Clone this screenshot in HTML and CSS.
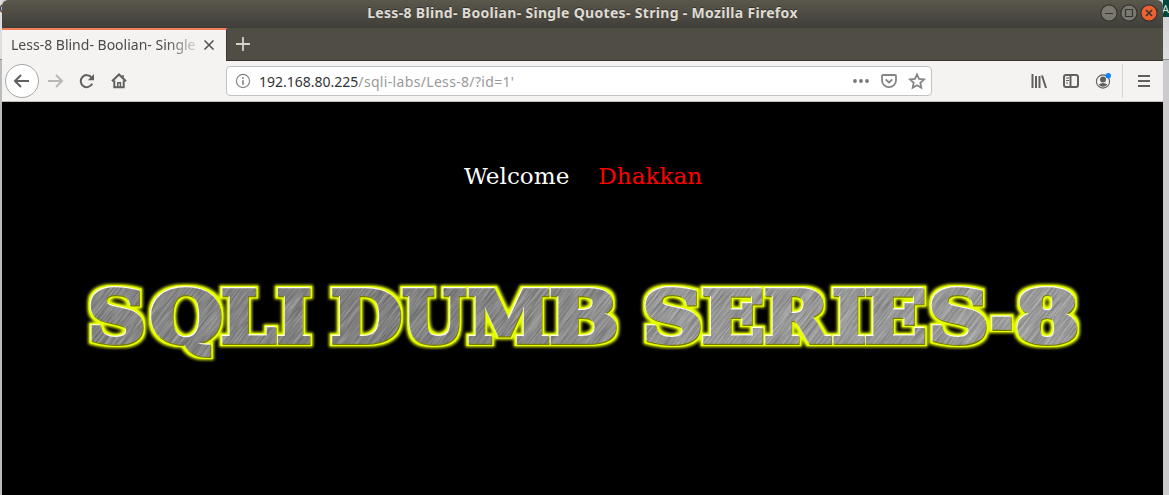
FILE: index.html
```html
<!DOCTYPE html>
<html lang="en">
<head>
<meta charset="utf-8">
<title>Less-8 Blind- Boolian- Single Quotes- String</title>
<link rel="stylesheet" href="styles.css">
</head>
<body>
<div class="desktop">
  <div class="behind-left"><span>C</span></div>
  <div class="window">
    <header class="titlebar">
      <h1 class="window-title">Less-8 Blind- Boolian- Single Quotes- String - Mozilla Firefox</h1>
      <div class="controls">
        <svg class="control" viewBox="0 0 18 18"><circle cx="9" cy="9" r="8.1"/><path d="M5 9.5h8"/></svg>
        <svg class="control" viewBox="0 0 18 18"><circle cx="9" cy="9" r="8.1"/><path d="M5.5 5.5h7v7h-7z"/></svg>
        <svg class="control close" viewBox="0 0 18 18"><circle cx="9" cy="9" r="8.1"/><path d="M6 6l6 6M12 6l-6 6"/></svg>
      </div>
    </header>
    <div class="tabs">
      <div class="tab"><span class="tab-label">Less-8 Blind- Boolian- Single</span><svg class="tab-close" viewBox="0 0 12 12"><path d="M1.5 1.5l9 9M10.5 1.5l-9 9"/></svg></div>
      <svg class="new-tab" viewBox="0 0 16 16"><path d="M8 1v14M1 8h14"/></svg>
    </div>
    <nav class="toolbar">
      <div class="back"><svg class="icon" viewBox="0 0 16 16"><path d="M15 8H1.5M7 2L1 8l6 6"/></svg></div>
      <svg class="icon forward" viewBox="0 0 16 16"><path d="M1 8h13.5M9 2l6 6-6 6"/></svg>
      <svg class="icon reload" viewBox="0 0 16 16"><path d="M12.6 4.6A6 6 0 1 0 13.2 10.6"/><path class="solid" d="M15 1v6.2H8.8z"/></svg>
      <svg class="icon home" viewBox="0 0 16 16"><path d="M1 8.3L8 1.5l7 6.8M3.3 7.5v6.7h9.4V7.5"/><path class="door" d="M6.8 14V9.8h2.6V14M12 2v3"/></svg>
      <div class="urlbar">
        <svg class="icon info" viewBox="0 0 16 16"><circle cx="8" cy="8" r="6.6"/><path class="info-mark" d="M8 7.2v4.5M8 4.2v1.7"/></svg>
        <div class="url"><span class="host">192.168.80.225</span><span class="path">/sqli-labs/Less-8/?id=1'</span></div>
        <svg class="icon light dots" viewBox="0 0 16 16"><circle cx="2" cy="8" r="1.9"/><circle cx="8" cy="8" r="1.9"/><circle cx="14" cy="8" r="1.9"/></svg>
        <svg class="icon light pocket" viewBox="0 0 16 16"><path d="M2 2h12a1 1 0 0 1 1 1v4.2a7 7 0 0 1-14 0V3a1 1 0 0 1 1-1z"/><path d="M4.7 6.3L8 9.4l3.3-3.1"/></svg>
        <svg class="icon light" viewBox="0 0 16 16"><path d="M8 1.4l2 4.5 5 .5-3.7 3.4 1 4.9L8 12.2l-4.3 2.5 1-4.9L1 6.4l5-.5z"/></svg>
      </div>
      <svg class="icon library" viewBox="0 0 16 16"><path d="M1.5 1v14M5 3v12M8.5 3v12M11 2.5L15 15"/></svg>
      <svg class="icon sidebar" viewBox="0 0 16 16"><rect x="1" y="2" width="14" height="12" rx="2"/><path d="M7.5 2v12"/><path class="thin" d="M3 5h3M3 7.5h3M3 10h2"/></svg>
      <svg class="icon account" viewBox="0 0 16 16"><circle class="thin" cx="8" cy="8.5" r="6.6"/><circle class="solid" cx="8" cy="6.5" r="3"/><path class="solid" d="M3.5 11.5q4.5-3 9 0-4.5 4.5-9 0"/><circle class="badge" cx="13.3" cy="2.8" r="2.7"/></svg>
      <span class="divider"></span>
      <svg class="icon menu" viewBox="0 0 16 16"><path d="M2 3h12M2 8h12M2 13h12"/></svg>
    </nav>
    <main class="page">
      <p class="welcome"><span>Welcome</span><span class="name">Dhakkan</span></p>
      <svg class="banner" viewBox="70 270 1030 100">
        <defs>
          <g id="lettering"></g>
          <filter id="glow" filterUnits="userSpaceOnUse" x="70" y="270" width="1030" height="100" color-interpolation-filters="sRGB">
            <feMorphology in="SourceAlpha" operator="dilate" radius="3.4" result="wide"/>
            <feGaussianBlur in="wide" stdDeviation="1.8" result="soft"/>
            <feFlood flood-color="#e8ff00"/><feComposite in2="soft" operator="in" result="halo"/>
            <feMorphology in="SourceAlpha" operator="dilate" radius="2" result="near"/>
            <feGaussianBlur in="near" stdDeviation=".7" result="rim"/>
            <feFlood flood-color="#e8ff00"/><feComposite in2="rim" operator="in" result="edge"/>
            <feMerge><feMergeNode in="halo"/><feMergeNode in="edge"/></feMerge>
          </filter>
          <filter id="brushed" x="0" y="0" width="1" height="1" color-interpolation-filters="sRGB">
            <feTurbulence type="fractalNoise" baseFrequency=".03 .7" numOctaves="3" seed="8"/>
            <feColorMatrix values=".42 0 0 0 .34  .42 0 0 0 .34  .42 0 0 0 .34  0 0 0 0 1"/>
          </filter>
          <linearGradient id="shade"><stop offset="0" stop-color="#000" stop-opacity=".05"/><stop offset=".35" stop-color="#000" stop-opacity=".08"/><stop offset=".6" stop-color="#fff" stop-opacity=".1"/><stop offset="1" stop-color="#fff" stop-opacity=".12"/></linearGradient>
          <mask id="cut" maskUnits="userSpaceOnUse" x="70" y="270" width="1030" height="100"><use href="#lettering" class="cutout"/></mask>
        </defs>
        <use href="#lettering" filter="url(#glow)"/>
        <use href="#lettering" class="shadow" x=".5" y=".5"/>
        <use href="#lettering" class="highlight" x="-.7" y="-.7"/>
        <g mask="url(#cut)">
          <g transform="rotate(-52 585 320)"><rect x="50" y="-250" width="1080" height="1140" filter="url(#brushed)"/></g>
          <rect x="70" y="270" width="1030" height="100" fill="url(#shade)"/>
        </g>
      </svg>
    </main>
  </div>
  <div class="behind-right"><span>A</span></div>
</div>
<script src="banner.js"></script>
</body>
</html>
```
FILE: banner.js
```js
// Each entry holds a character and its left and right ink edges.
const letters = [
  ["S",90,144],["Q",150,221],["L",222,276.5],["I",277.5,310],
  ["D",332,401],["U",402,466.5],["M",467.5,549.5],["B",550.5,617],
  ["S",645,701],["E",703,763],["R",765,832],["I",833,864.5],
  ["E",865.5,925],["S",931,987],["-",991,1012],["8",1017,1077]
];
const context = document.createElement("canvas").getContext("2d");
context.font = 'bold 71px "DejaVu Serif"';
const target = document.getElementById("lettering");
for (const [char, left, right] of letters) {
  const m = context.measureText(char);
  const inset = 2;
  const scale = (right - left - inset * 2) / (m.actualBoundingBoxLeft + m.actualBoundingBoxRight);
  const text = document.createElementNS("http://www.w3.org/2000/svg", "text");
  text.textContent = char;
  text.setAttribute("transform", `translate(${left + inset + m.actualBoundingBoxLeft * scale} 342) scale(${scale} 1)`);
  target.append(text);
}
```
FILE: styles.css
```css
* { box-sizing: border-box; }
body { margin: 0; background: #d2d1d3; font-family: "Noto Sans", sans-serif; overflow: hidden; }
.desktop { display: flex; width: 1169px; height: 495px; }
.behind-left { width: 2px; overflow: hidden; background: linear-gradient(#dedddf 59px, #888 59px, #888 60px, #bcbcbc 60px); font-size: 13px; color: #333; }
.behind-left span { display: block; margin-left: -1px; line-height: 16px; }
.behind-right { width: 6px; overflow: hidden; background: linear-gradient(#00463c 17px, #d3d3d5 17px, #dedee0 59px, #939393 59px, #939393 60px, #cbcacc 60px); color: #d6e5e2; font-size: 11px; line-height: 17px; }
.behind-right span { display: block; margin-left: -1px; }
.window { width: 1161px; display: flex; flex-direction: column; border-radius: 6px 6px 0 0; overflow: hidden; }
.titlebar { height: 28px; flex: none; display: grid; grid-template-columns: 1fr auto 1fr; align-items: center; background: linear-gradient(#5b574d, #403f39); border-bottom: 1px solid #3c3b37; }
.window-title { grid-column: 2; margin: 0; color: #dfdbd2; font-size: 14px; letter-spacing: .32px; line-height: 24px; padding-bottom: 2px; font-weight: 700; white-space: nowrap; text-shadow: 0 -1px #33322e; }
.controls { justify-self: end; display: flex; gap: 2px; padding: 0 5px 1px 0; }
.control { width: 18px; height: 18px; fill: #7b796f; stroke: #35342f; stroke-width: 1.2; }
.control path { fill: none; }
.close { fill: #ef6031; }
.close path { stroke-width: 1.7; }
.tabs { height: 33px; flex: none; display: flex; align-items: center; background: #504d45; border-bottom: 1px solid #3a302f; }
.tab { width: 225px; height: 34px; flex: none; display: flex; align-items: center; padding-left: 9px; background: #f4f3f2; border-top: 2px solid #ef805a; border-right: 1px solid #3b3934; margin-bottom: -1px; }
.tab-label { width: 186px; margin-top: -2px; white-space: nowrap; font-size: 14px; color: #4c4a48; mask-image: linear-gradient(90deg, #000 155px, rgba(0,0,0,.15) 186px); }
.tab-close { width: 12px; height: 12px; margin: -2px 0 0 6px; fill: none; stroke: #555; stroke-width: 1.6; }
.new-tab { width: 16px; height: 16px; margin-left: 8px; stroke: #d5d2ca; stroke-width: 1.8; }
.toolbar { height: 41px; flex: none; display: flex; align-items: center; background: #f4f3f2; border-bottom: 1px solid #bebdbb; padding-left: 3px; }
.icon { width: 16px; height: 16px; flex: none; fill: none; stroke: #60605e; stroke-width: 2; overflow: visible; }
.solid { fill: #60605e; stroke: none; }
.thin { stroke-width: 1.1; }
.door { stroke-width: 1.5; }
.back { width: 34px; height: 34px; display: grid; place-items: center; flex: none; border: 1px solid #a9a8a6; border-radius: 50%; background: #fff; }
.forward { margin-left: 8px; stroke: #b9b8b6; }
.reload { margin-left: 16px; }
.home { margin-left: 16px; }
.urlbar { width: 706px; height: 30px; flex: none; margin-left: 99px; padding: 0 6px 0 8px; display: flex; align-items: center; background: #fff; border: 1px solid #c3c2c0; border-radius: 4px; }
.info { stroke: #858585; stroke-width: 1.2; }
.info-mark { stroke-width: 1.7; }
.url { flex: 1; margin-left: 8px; font-size: 14px; line-height: 24px; padding-top: 1px; white-space: nowrap; color: #333; }
.path { color: #999; letter-spacing: .33px; }
.light { stroke: #858585; stroke-width: 1.8; }
.dots { fill: #777; stroke: none; }
.pocket { margin: 0 12px; }
.library { margin-left: 99px; }
.sidebar { margin-left: 16px; }
.account { margin-left: 16px; }
.badge { fill: #0a84ff; stroke: none; }
.divider { width: 1px; height: 34px; margin-left: 11px; background: #d5d4d2; }
.menu { margin-left: 13px; }
.page { flex: 1; background: #000; display: flex; flex-direction: column; align-items: flex-start; }
.welcome { margin: 59px 0 0 462px; display: flex; gap: 29px; font-family: "DejaVu Serif", serif; font-size: 23.1px; line-height: 30px; color: #fff; }
.name { color: #f00; }
.banner { width: 1030px; height: 100px; margin: 79px 0 0 68px; font: bold 71px "DejaVu Serif", serif; stroke-width: 4; stroke-linejoin: miter; stroke-miterlimit: 2; fill: #e8ff00; stroke: #e8ff00; }
.banner rect { stroke: none; }
.shadow { fill: #777b00; stroke: #777b00; }
.highlight { fill: #fffff0; stroke: #fffff0; }
.cutout { fill: #fff; stroke: #fff; stroke-width: 3.6; }
```
